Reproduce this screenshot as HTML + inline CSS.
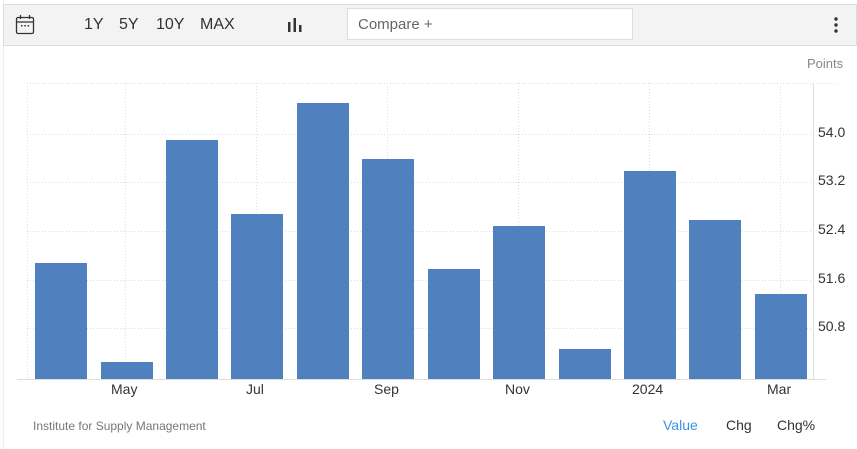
<!DOCTYPE html>
<html><head><meta charset="utf-8"><style>
html,body{margin:0;padding:0;background:#fff;width:857px;height:449px;overflow:hidden;font-family:"Liberation Sans",Arial,sans-serif}
.wrap{position:absolute;left:3px;top:0;width:854px;height:449px;border-left:1px solid #eee}
.tb{position:absolute;left:3px;top:4px;width:852px;height:40px;background:#f3f3f3;border:1px solid #ddd}
.t{position:absolute;top:16px;font-size:16px;color:#333}
.cmp{position:absolute;left:347px;top:8px;width:286px;height:32px;background:#fff;border:1px solid #ddd;box-sizing:border-box;font-size:15px;color:#666;padding:7px 10px}
.lbl{position:absolute;font-size:14px;color:#333}
</style></head><body>
<div class="wrap"></div>
<div class="tb"></div>
<svg style="position:absolute;left:15px;top:14px" width="20" height="22" viewBox="0 0 20 22"><rect x="1.5" y="3.5" width="17" height="16" rx="1.5" fill="none" stroke="#333" stroke-width="1.3"/><line x1="1.5" y1="8" x2="18.5" y2="8" stroke="#333" stroke-width="1.3"/><line x1="5.5" y1="1" x2="5.5" y2="5" stroke="#333" stroke-width="1.3"/><line x1="14.5" y1="1" x2="14.5" y2="5" stroke="#333" stroke-width="1.3"/><rect x="6" y="11" width="1.5" height="1.5" fill="#333"/><rect x="9.3" y="11" width="1.5" height="1.5" fill="#333"/><rect x="12.6" y="11" width="1.5" height="1.5" fill="#333"/></svg>
<div class="t" style="left:84px">1Y</div>
<div class="t" style="left:119px">5Y</div>
<div class="t" style="left:156px">10Y</div>
<div class="t" style="left:200px">MAX</div>
<svg style="position:absolute;left:287px;top:17px" width="16" height="16"><rect x="1" y="5" width="2.5" height="10" fill="#333"/><rect x="6.5" y="1" width="2.5" height="14" fill="#333"/><rect x="12" y="8" width="2.5" height="7" fill="#333"/></svg>
<div class="cmp">Compare +</div>
<svg style="position:absolute;left:833px;top:17px" width="6" height="16"><circle cx="3" cy="2" r="1.7" fill="#333"/><circle cx="3" cy="8" r="1.7" fill="#333"/><circle cx="3" cy="14" r="1.7" fill="#333"/></svg>
<div class="lbl" style="left:807px;top:56px;font-size:13px;color:#888">Points</div>
<svg style="position:absolute;left:0;top:0" width="857" height="449">
<g stroke="#ddd" stroke-dasharray="1,2" stroke-width="1">
<line x1="27" y1="83.5" x2="835" y2="83.5"/>
<line x1="27" y1="134.5" x2="813" y2="134.5"/>
<line x1="27" y1="182.5" x2="813" y2="182.5"/>
<line x1="27" y1="231.5" x2="813" y2="231.5"/>
<line x1="27" y1="280.5" x2="813" y2="280.5"/>
<line x1="27" y1="328.5" x2="813" y2="328.5"/>
<line x1="27.5" y1="83" x2="27.5" y2="379"/>
<line x1="125.5" y1="83" x2="125.5" y2="379"/>
<line x1="256.5" y1="83" x2="256.5" y2="379"/>
<line x1="387.5" y1="83" x2="387.5" y2="379"/>
<line x1="518.5" y1="83" x2="518.5" y2="379"/>
<line x1="649.5" y1="83" x2="649.5" y2="379"/>
<line x1="780.5" y1="83" x2="780.5" y2="379"/>
</g>
<line x1="813.5" y1="83" x2="813.5" y2="379" stroke="#ddd"/>
<line x1="17" y1="379.5" x2="826" y2="379.5" stroke="#ddd"/>
<g fill="#4e81bd">
<rect x="35" y="263" width="52" height="116"/>
<rect x="101" y="362" width="52" height="17"/>
<rect x="166" y="140" width="52" height="239"/>
<rect x="231" y="214" width="52" height="165"/>
<rect x="297" y="103" width="52" height="276"/>
<rect x="362" y="159" width="52" height="220"/>
<rect x="428" y="269" width="52" height="110"/>
<rect x="493" y="226" width="52" height="153"/>
<rect x="559" y="349" width="52" height="30"/>
<rect x="624" y="171" width="52" height="208"/>
<rect x="689" y="220" width="52" height="159"/>
<rect x="755" y="294" width="52" height="85"/>
</g>
</svg>
<div class="lbl" style="left:818px;top:124px">54.0</div>
<div class="lbl" style="left:818px;top:172px">53.2</div>
<div class="lbl" style="left:818px;top:221px">52.4</div>
<div class="lbl" style="left:818px;top:270px">51.6</div>
<div class="lbl" style="left:818px;top:318px">50.8</div>
<div class="lbl" style="left:111px;top:381px">May</div>
<div class="lbl" style="left:246px;top:381px">Jul</div>
<div class="lbl" style="left:374px;top:381px">Sep</div>
<div class="lbl" style="left:505px;top:381px">Nov</div>
<div class="lbl" style="left:632px;top:381px">2024</div>
<div class="lbl" style="left:767px;top:381px">Mar</div>
<div class="lbl" style="left:33px;top:419px;font-size:12px;color:#777">Institute for Supply Management</div>
<div class="lbl" style="left:663px;top:417px;color:#3c93e6">Value</div>
<div class="lbl" style="left:726px;top:417px">Chg</div>
<div class="lbl" style="left:777px;top:417px">Chg%</div>
</body></html>
